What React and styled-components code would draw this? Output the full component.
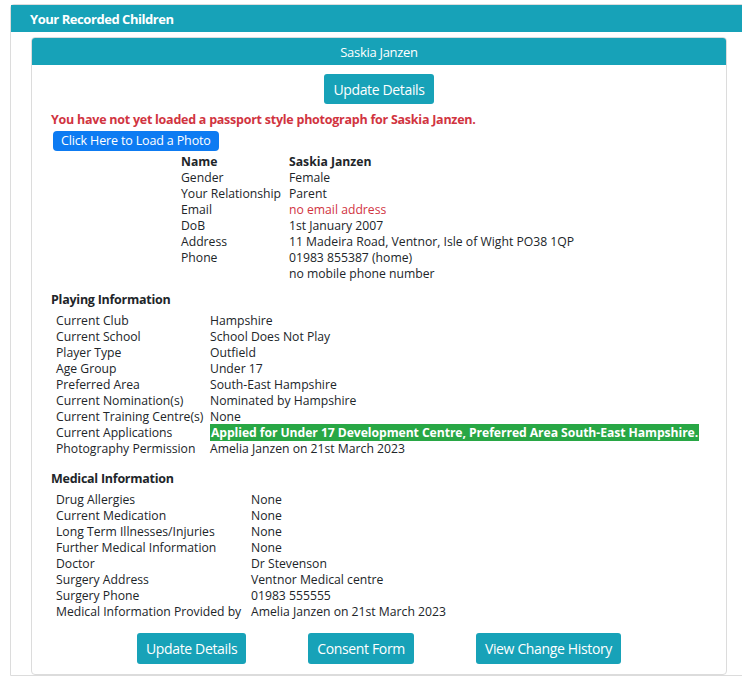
import React from 'react';
import styled, { createGlobalStyle } from 'styled-components';

const GlobalStyle = createGlobalStyle`
  body {
    margin: 0;
    background: #fff;
    overflow: hidden;
    font-family: "Open Sans", "Noto Sans", sans-serif;
    color: #212529;
  }
`;

const OuterCard = styled.div`
  margin: 4px 0 0 10px;
  width: 736px;
  border: 1px solid #dcdcdc;
  border-radius: 4px 4px 0 0;
`;

const OuterHeader = styled.div`
  height: 27px;
  background: #17a2b8;
  color: #fff;
  font-weight: 700;
  font-size: 13px;
  letter-spacing: -0.45px;
  display: flex;
  align-items: center;
  padding-left: 19px;
`;

const OuterBody = styled.div`
  padding: 5px 20px 0;
`;

const ChildCard = styled.div`
  border: 1px solid #dcdcdc;
  border-radius: 4px;
  background: #fff;
`;

const ChildHeader = styled.div`
  height: 27px;
  background: #17a2b8;
  color: #fff;
  font-size: 13px;
  letter-spacing: -0.3px;
  display: flex;
  align-items: center;
  justify-content: center;
  border-radius: 3px 3px 0 0;
`;

const ChildBody = styled.div`
  padding: 9px 19px 10px;
`;

const Centered = styled.div`
  display: flex;
  justify-content: center;
  gap: ${p => p.$gap || 0}px;
  margin-top: ${p => p.$top || 0}px;
`;

const ActionButton = styled.button`
  height: ${p => p.$h || 31}px;
  padding: 0 9px;
  border: none;
  border-radius: 3px;
  background: #17a2b8;
  color: #fff;
  font-family: inherit;
  font-size: 14px;
  letter-spacing: -0.35px;
  cursor: pointer;
`;

const Warning = styled.div`
  margin-top: 8px;
  color: #d1343f;
  font-weight: 700;
  font-size: 12.5px;
  letter-spacing: -0.25px;
  line-height: 16px;
`;

const PhotoButton = styled.button`
  margin: 2px 0 0 2px;
  height: 20px;
  padding: 0 8px;
  border: none;
  border-radius: 4px;
  background: #0d7bf2;
  color: #fff;
  font-family: inherit;
  font-size: 12.5px;
  letter-spacing: -0.15px;
`;

const InfoTable = styled.div`
  display: grid;
  grid-template-columns: ${p => p.$label}px auto;
  margin: ${p => p.$margin};
  font-size: 12.2px;
  line-height: 16px;
  justify-content: start;
`;

const Label = styled.div`
  font-weight: ${p => (p.$bold ? 700 : 400)};
  white-space: nowrap;
`;

const Value = styled.div`
  font-weight: ${p => (p.$bold ? 700 : 400)};
  color: ${p => (p.$alert ? '#d1343f' : 'inherit')};
  white-space: nowrap;
`;

const Highlight = styled.span`
  background: #28a745;
  color: #fff;
  font-weight: 700;
  letter-spacing: -0.07px;
  padding: 0 1px;
`;

const SectionTitle = styled.div`
  margin-top: ${p => p.$top}px;
  font-weight: 700;
  font-size: 12.5px;
  letter-spacing: -0.25px;
  line-height: 16px;
`;

const personal = [
  ['Name', 'Saskia Janzen', { bold: true }],
  ['Gender', 'Female'],
  ['Your Relationship', 'Parent'],
  ['Email', 'no email address', { alert: true }],
  ['DoB', '1st January 2007'],
  ['Address', '11 Madeira Road, Ventnor, Isle of Wight PO38 1QP'],
  ['Phone', '01983 855387 (home)'],
  ['', 'no mobile phone number'],
];

const playing = [
  ['Current Club', 'Hampshire'],
  ['Current School', 'School Does Not Play'],
  ['Player Type', 'Outfield'],
  ['Age Group', 'Under 17'],
  ['Preferred Area', 'South-East Hampshire'],
  ['Current Nomination(s)', 'Nominated by Hampshire'],
  ['Current Training Centre(s)', 'None'],
  ['Current Applications', <Highlight key="app">Applied for Under 17 Development Centre, Preferred Area South-East Hampshire.</Highlight>],
  ['Photography Permission', 'Amelia Janzen on 21st March 2023'],
];

const medical = [
  ['Drug Allergies', 'None'],
  ['Current Medication', 'None'],
  ['Long Term Illnesses/Injuries', 'None'],
  ['Further Medical Information', 'None'],
  ['Doctor', 'Dr Stevenson'],
  ['Surgery Address', 'Ventnor Medical centre'],
  ['Surgery Phone', '01983 555555'],
  ['Medical Information Provided by', 'Amelia Janzen on 21st March 2023'],
];

const Rows = ({ rows }) =>
  rows.map(([label, value, opts = {}], i) => (
    <React.Fragment key={i}>
      <Label $bold={opts.bold}>{label}</Label>
      <Value $bold={opts.bold} $alert={opts.alert}>{value}</Value>
    </React.Fragment>
  ));

export default function App() {
  return (
    <>
      <GlobalStyle />
      <OuterCard>
        <OuterHeader>Your Recorded Children</OuterHeader>
        <OuterBody>
          <ChildCard>
            <ChildHeader>Saskia Janzen</ChildHeader>
            <ChildBody>
              <Centered>
                <ActionButton $h={30}>Update Details</ActionButton>
              </Centered>
              <Warning>You have not yet loaded a passport style photograph for Saskia Janzen.</Warning>
              <PhotoButton>Click Here to Load a Photo</PhotoButton>
              <InfoTable $label={108} $margin="3px 0 0 130px">
                <Rows rows={personal} />
              </InfoTable>

              <SectionTitle $top={10}>Playing Information</SectionTitle>
              <InfoTable $label={154} $margin="5px 0 0 5px">
                <Rows rows={playing} />
              </InfoTable>

              <SectionTitle $top={14}>Medical Information</SectionTitle>
              <InfoTable $label={195} $margin="5px 0 0 5px">
                <Rows rows={medical} />
              </InfoTable>

              <Centered $gap={62} $top={13}>
                <ActionButton>Update Details</ActionButton>
                <ActionButton>Consent Form</ActionButton>
                <ActionButton>View Change History</ActionButton>
              </Centered>
            </ChildBody>
          </ChildCard>
        </OuterBody>
      </OuterCard>
    </>
  );
}
